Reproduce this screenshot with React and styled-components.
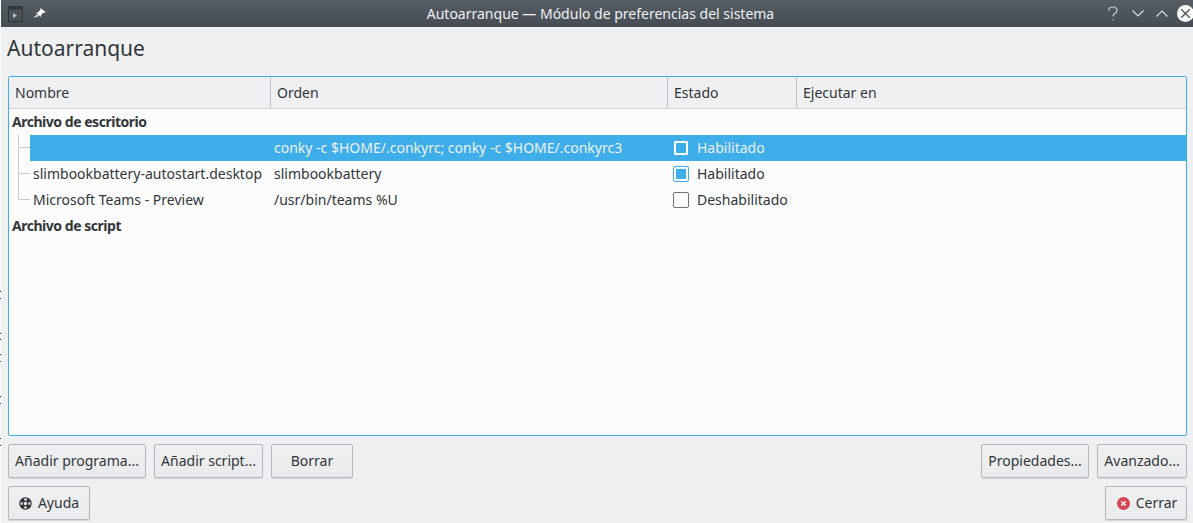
import React from "react";
import styled, { createGlobalStyle } from "styled-components";

const GlobalStyle = createGlobalStyle`
  html, body {
    margin: 0;
    padding: 0;
    background: #eff0f1;
  }
  * {
    box-sizing: border-box;
  }
`;

const Screen = styled.div`
  width: 1193px;
  height: 523px;
  display: flex;
  overflow: hidden;
  background: #fcfcfc;
`;

const Window = styled.div`
  flex: 1;
  min-width: 0;
  display: flex;
  flex-direction: column;
  background: #eff0f1;
  color: #31363b;
  font-family: "Noto Sans", sans-serif;
  font-size: 14px;
`;

const TitleBar = styled.header`
  height: 27px;
  flex: none;
  display: flex;
  align-items: center;
  justify-content: space-between;
  padding: 0 0 0 7px;
  background: linear-gradient(#565e65, #454c53);
  color: #eff0f1;
  position: relative;
`;

const TitleGroup = styled.div`
  display: flex;
  align-items: center;
  gap: ${(p) => p.$gap}px;
`;

const TitleText = styled.div`
  position: absolute;
  left: 7px;
  right: 0;
  text-align: center;
  pointer-events: none;
`;

const Content = styled.main`
  flex: 1;
  min-height: 0;
  display: flex;
  flex-direction: column;
  padding: 0 6px 3px 7px;
`;

const Heading = styled.h1`
  margin: 0 0 0 -1px;
  height: 49px;
  padding-top: 5px;
  font-size: 21px;
  line-height: 33px;
  font-weight: 400;
  color: #31363b;
`;

const TreeFrame = styled.section`
  flex: 1;
  min-height: 0;
  background: #fcfcfc;
  border: 1px solid #3daee9;
  border-radius: 2px;
  display: flex;
  flex-direction: column;
`;

const Header = styled.div`
  height: 32px;
  flex: none;
  display: grid;
  grid-template-columns: 262px 397px 129px 1fr;
  background: #eff0f1;
  border-bottom: 1px solid #d2d4d6;
`;

const HeaderCell = styled.div`
  display: flex;
  align-items: center;
  padding-left: 6px;
  border-right: 1px solid #c4c7c9;
  &:last-child {
    border-right: 0;
  }
`;

const GroupRow = styled.div`
  height: 26px;
  line-height: 26px;
  padding-left: 3px;
  font-weight: 700;
  letter-spacing: -0.47px;
`;

const Row = styled.div`
  height: 26px;
  display: grid;
  grid-template-columns: 21px 240px 398px 1fr;
  align-items: center;
`;

const Branch = styled.div`
  height: 26px;
  position: relative;
  &::before {
    content: "";
    position: absolute;
    left: 9px;
    top: 0;
    bottom: ${(p) => (p.$last ? "13px" : "0")};
    border-left: 1px solid #c8cacc;
  }
  &::after {
    content: "";
    position: absolute;
    left: 9px;
    right: 0;
    top: 12px;
    border-top: 1px solid #c8cacc;
  }
`;

const NameCell = styled.div`
  height: 26px;
  line-height: 26px;
  padding-left: 3px;
  white-space: nowrap;
  background: ${(p) => (p.$selected ? "#3daee9" : "transparent")};
`;

const OrderCell = styled.div`
  height: 26px;
  line-height: 26px;
  padding-left: 4px;
  white-space: nowrap;
  background: ${(p) => (p.$selected ? "#3daee9" : "transparent")};
  color: ${(p) => (p.$selected ? "#eff0f1" : "inherit")};
`;

const StateCell = styled.div`
  height: 26px;
  line-height: 26px;
  display: flex;
  align-items: center;
  gap: 8px;
  padding-left: 5px;
  background: ${(p) => (p.$selected ? "#3daee9" : "transparent")};
  color: ${(p) => (p.$selected ? "#eff0f1" : "inherit")};
`;

const CheckBox = styled.span`
  width: 16px;
  height: 16px;
  flex: none;
  border-radius: 2px;
  padding: 2px;
  background: #fcfcfc;
  border: 1px solid ${(p) => (p.$state === "off" ? "#6f7679" : "#3daee9")};
  &::after {
    content: "";
    display: ${(p) => (p.$state === "on" ? "block" : "none")};
    width: 100%;
    height: 100%;
    background: #3daee9;
  }
`;

const SelectedCheck = styled.span`
  width: 14px;
  height: 14px;
  flex: none;
  margin: 0 1px;
  border: 2px solid #fcfcfc;
  border-radius: 1px;
  background: #3daee9;
`;

const Spacer = styled.div`
  flex: 1;
`;

const ButtonRow = styled.div`
  flex: none;
  display: flex;
  gap: 8px;
  margin-top: 8px;
`;

const Button = styled.button`
  height: 34px;
  width: ${(p) => p.$width}px;
  flex: none;
  display: flex;
  align-items: center;
  justify-content: center;
  gap: 6px;
  padding: 0 0 2px ${(p) => p.$inset || 0}px;
  font: inherit;
  color: #31363b;
  background: linear-gradient(#eff0f1, #e9eaeb);
  border: 1px solid #b5b8ba;
  border-radius: 2px;
  box-shadow: 0 1px 1px rgba(0, 0, 0, 0.12);
`;

const ButtonIcon = styled.span`
  display: flex;
  margin-top: 2px;
`;

const DesktopEdge = () => (
  <svg width="1" height="523" viewBox="0 0 1 523" style={{ flex: "none" }}>
    <path d="M0 291.5h1M0 333.5h1M0 339.5h1M0 354.5h1M0 396.5h1M0 438.5h1M0 445.5h1" stroke="#31363b" />
    <path d="M0 298.5h1M0 361.5h1M0 403.5h1" stroke="#2d5fa8" />
  </svg>
);

const PinIcon = () => (
  <svg width="13" height="11" viewBox="0 0 13 11">
    <path d="M7.5 0 12.5 4 11.5 5 10 4.8 8 7.5 7.8 9 3 5 5 4.3 7.3 2Z" fill="#fcfcfc" />
    <path d="M4 6.5.3 10 5.8 8Z" fill="#fcfcfc" />
  </svg>
);

const MenuIcon = () => (
  <svg width="15" height="16" viewBox="0 0 15 16">
    <rect x="0.5" y="0.5" width="14" height="15" fill="#4a5157" stroke="#30353a" />
    <rect x="1" y="1" width="13" height="2.5" fill="#33383d" />
    <path d="M5 7 9 9.5 5 12Z" fill="#b9bdc0" />
  </svg>
);

const HelpGlyph = () => (
  <svg width="14" height="16" viewBox="0 0 14 16" fill="none" stroke="#c9cccf" strokeWidth="1.2">
    <path d="M2.6 4.6C2.8 2.2 4.6 1 6.8 1c2.4 0 4.2 1.4 4.2 3.4 0 1.5-.9 2.3-2.2 3.1C7.5 8.3 7 9 7 10.6" />
    <circle cx="7" cy="14" r=".7" fill="#c9cccf" stroke="none" />
  </svg>
);

const Chevron = ({ up }) => (
  <svg width="12" height="7" viewBox="0 0 12 7" fill="none" stroke="#dfe1e3" strokeWidth="1.1">
    <path d={up ? "M.5 6.5 6 1l5.5 5.5" : "M.5.5 6 6 11.5.5"} />
  </svg>
);

const CloseWrap = styled.span`
  display: flex;
  margin: 0 -1px 0 -3px;
`;

const CloseIcon = () => (
  <CloseWrap>
    <svg width="17" height="17" viewBox="0 0 17 17">
      <circle cx="8.5" cy="8.5" r="8.5" fill="#fcfcfc" />
      <path d="M4.2 4.2 12.8 12.8M12.8 4.2 4.2 12.8" stroke="#4d5459" strokeWidth="1.3" />
    </svg>
  </CloseWrap>
);

const HelpIcon = () => (
  <svg width="13" height="13" viewBox="0 0 13 13">
    <circle cx="6.5" cy="6.5" r="6.2" fill="#31363b" />
    <path d="M5.2 1.6h2.6v2H5.2ZM5.2 9.4h2.6v2H5.2ZM1.6 5.2h2v2.6h-2ZM9.4 5.2h2v2.6h-2Z" fill="#eceded" />
    <circle cx="6.5" cy="6.5" r="1.7" fill="#eceded" />
  </svg>
);

const DeleteIcon = () => (
  <svg width="13" height="13" viewBox="0 0 13 13">
    <circle cx="6.5" cy="6.5" r="6.5" fill="#da4453" />
    <path d="M4.2 4.2 8.8 8.8M8.8 4.2 4.2 8.8" stroke="#fcfcfc" strokeWidth="1.4" />
  </svg>
);

const rows = [
  { name: "", order: "conky -c $HOME/.conkyrc; conky -c $HOME/.conkyrc3", state: "Habilitado", check: "selected", selected: true },
  { name: "slimbookbattery-autostart.desktop", order: "slimbookbattery", state: "Habilitado", check: "on" },
  { name: "Microsoft Teams - Preview", order: "/usr/bin/teams %U", state: "Deshabilitado", check: "off", last: true },
];

export default function App() {
  return (
    <Screen>
      <GlobalStyle />
      <DesktopEdge />
      <Window>
        <TitleBar>
          <TitleText>Autoarranque — Módulo de preferencias del sistema</TitleText>
          <TitleGroup $gap={10}>
            <MenuIcon />
            <PinIcon />
          </TitleGroup>
          <TitleGroup $gap={12}>
            <HelpGlyph />
            <Chevron />
            <Chevron up />
            <CloseIcon />
          </TitleGroup>
        </TitleBar>
        <Content>
          <Heading>Autoarranque</Heading>
          <TreeFrame>
            <Header>
              <HeaderCell>Nombre</HeaderCell>
              <HeaderCell>Orden</HeaderCell>
              <HeaderCell>Estado</HeaderCell>
              <HeaderCell>Ejecutar en</HeaderCell>
            </Header>
            <GroupRow>Archivo de escritorio</GroupRow>
            {rows.map((row) => (
              <Row key={row.order}>
                <Branch $last={row.last} />
                <NameCell $selected={row.selected}>{row.name}</NameCell>
                <OrderCell $selected={row.selected}>{row.order}</OrderCell>
                <StateCell $selected={row.selected}>
                  {row.check === "selected" ? <SelectedCheck /> : <CheckBox $state={row.check} />}
                  {row.state}
                </StateCell>
              </Row>
            ))}
            <GroupRow>Archivo de script</GroupRow>
            <Spacer />
          </TreeFrame>
          <ButtonRow>
            <Button $width={138}>Añadir programa...</Button>
            <Button $width={109}>Añadir script...</Button>
            <Button $width={82}>Borrar</Button>
            <Spacer />
            <Button $width={108}>Propiedades...</Button>
            <Button $width={90}>Avanzado...</Button>
          </ButtonRow>
          <ButtonRow>
            <Button $width={82}>
              <ButtonIcon>
                <HelpIcon />
              </ButtonIcon>
              Ayuda
            </Button>
            <Spacer />
            <Button $width={82} $inset={2}>
              <ButtonIcon>
                <DeleteIcon />
              </ButtonIcon>
              Cerrar
            </Button>
          </ButtonRow>
        </Content>
      </Window>
    </Screen>
  );
}
